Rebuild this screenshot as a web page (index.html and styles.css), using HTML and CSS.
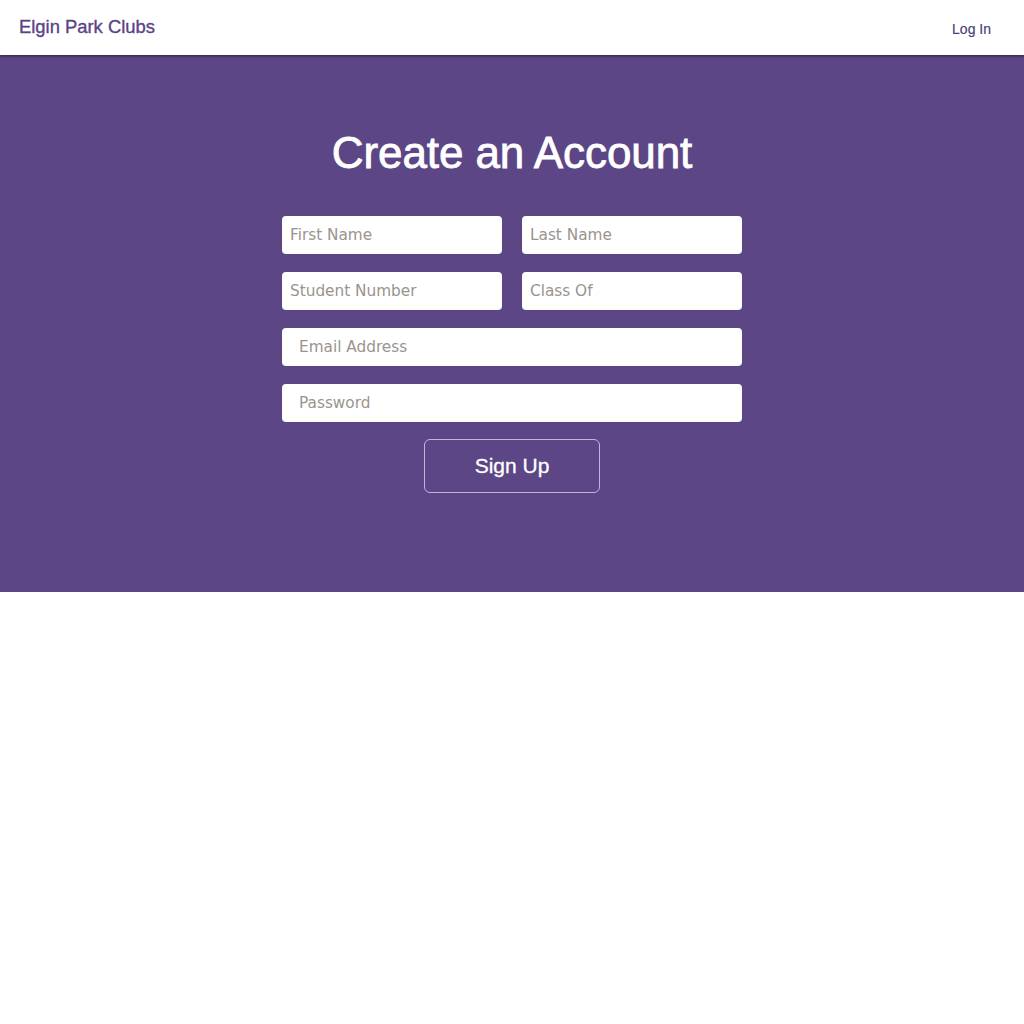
FILE: index.html
```html
<!DOCTYPE html>
<html>
<head>
<meta charset="utf-8">
<link rel="stylesheet" href="styles.css">
</head>
<body>
<header class="topbar">
  <a class="brand" href="#">Elgin Park Clubs</a>
  <a class="login" href="#">Log In</a>
</header>
<section class="hero">
  <h1 class="title">Create an Account</h1>
  <form class="form">
    <div class="row two">
      <input class="field" type="text" placeholder="First Name">
      <input class="field" type="text" placeholder="Last Name">
    </div>
    <div class="row two">
      <input class="field" type="text" placeholder="Student Number">
      <input class="field" type="text" placeholder="Class Of">
    </div>
    <div class="row">
      <input class="field wide" type="email" placeholder="Email Address">
    </div>
    <div class="row">
      <input class="field wide" type="password" placeholder="Password">
    </div>
    <div class="actions">
      <button class="signup" type="button">Sign Up</button>
    </div>
  </form>
</section>
</body>
</html>
```
FILE: styles.css
```css
* { box-sizing: border-box; }
html, body { margin: 0; padding: 0; background: #fff; }
body { font-family: "Liberation Sans", Arial, sans-serif; }

.topbar {
  height: 55px;
  display: flex;
  align-items: center;
  justify-content: space-between;
  padding: 0 33px 0 19px;
  background: #fff;
  position: relative;
  z-index: 2;
  box-shadow: 0 1px 3px rgba(0,0,0,0.55);
}
.brand {
  color: #5b4387;
  font-size: 18.4px;
  text-decoration: none;
  margin-top: -2px;
  -webkit-text-stroke: 0.35px #5b4387;
}
.login {
  color: #4a3b78;
  font-size: 14px;
  text-decoration: none;
  margin-top: 3px;
  -webkit-text-stroke: 0.15px #4a3b78;
}

.hero {
  background: #5d4685;
  height: 537px;
  display: flex;
  flex-direction: column;
  align-items: center;
  padding-top: 72px;
}
.title {
  margin: 0;
  color: #fff;
  font-weight: normal;
  font-size: 44px;
  line-height: 52px;
  letter-spacing: -0.1px;
  -webkit-text-stroke: 0.8px #fff;
}
.form {
  width: 460px;
  margin-top: 37px;
  display: flex;
  flex-direction: column;
  gap: 18px;
}
.row { display: flex; gap: 20px; }
.row.two .field { flex: 1; min-width: 0; }
.field {
  height: 38px;
  border: none;
  border-radius: 4px;
  background: #fff;
  padding: 0 8px;
  font-family: "DejaVu Sans", sans-serif;
  font-size: 15.3px;
  color: #333;
  outline: none;
}
.field::placeholder { color: #9a948f; }
.field.wide { width: 100%; padding-left: 17px; }
.actions { display: flex; justify-content: center; margin-top: -1px; }
.signup {
  width: 176px;
  height: 54px;
  background: transparent;
  border: 1px solid #c3b5dc;
  border-radius: 6px;
  color: #fff;
  font-family: "Liberation Sans", Arial, sans-serif;
  font-size: 21px;
  -webkit-text-stroke: 0.3px #fff;
  cursor: pointer;
}
```
